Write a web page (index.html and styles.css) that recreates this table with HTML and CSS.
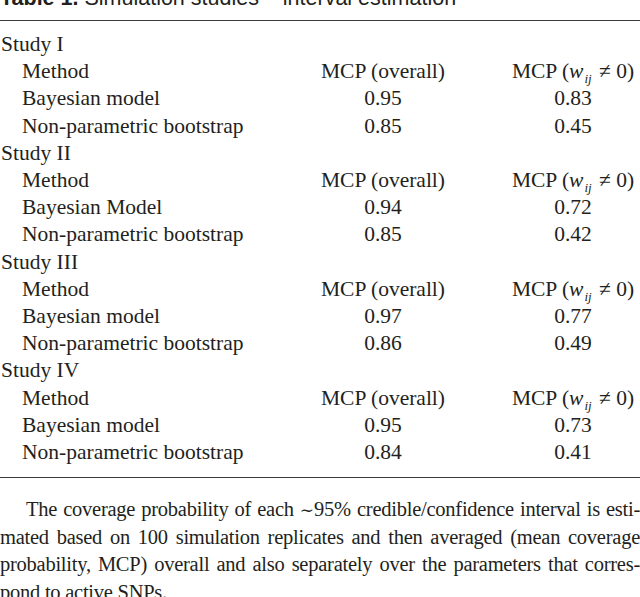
FILE: index.html
```html
<!DOCTYPE html>
<html>
<head>
<meta charset="utf-8">
<link rel="stylesheet" href="styles.css">
</head>
<body>
<div class="page">
  <p class="caption"><b>Table 1.</b> Simulation studies – interval estimation</p>
  <div class="table-wrap">
    <table class="tbl">
      <colgroup><col class="c1"><col class="c2"><col class="c3"></colgroup>
      <tbody>
        <tr><td class="grp" colspan="3">Study I</td></tr>
        <tr><td class="lbl">Method</td><td class="num">MCP (overall)</td><td class="num">MCP (<i>w</i><sub>ij</sub> ≠ 0)</td></tr>
        <tr><td class="lbl">Bayesian model</td><td class="num">0.95</td><td class="num">0.83</td></tr>
        <tr><td class="lbl">Non-parametric bootstrap</td><td class="num">0.85</td><td class="num">0.45</td></tr>
        <tr><td class="grp" colspan="3">Study II</td></tr>
        <tr><td class="lbl">Method</td><td class="num">MCP (overall)</td><td class="num">MCP (<i>w</i><sub>ij</sub> ≠ 0)</td></tr>
        <tr><td class="lbl">Bayesian Model</td><td class="num">0.94</td><td class="num">0.72</td></tr>
        <tr><td class="lbl">Non-parametric bootstrap</td><td class="num">0.85</td><td class="num">0.42</td></tr>
        <tr><td class="grp" colspan="3">Study III</td></tr>
        <tr><td class="lbl">Method</td><td class="num">MCP (overall)</td><td class="num">MCP (<i>w</i><sub>ij</sub> ≠ 0)</td></tr>
        <tr><td class="lbl">Bayesian model</td><td class="num">0.97</td><td class="num">0.77</td></tr>
        <tr><td class="lbl">Non-parametric bootstrap</td><td class="num">0.86</td><td class="num">0.49</td></tr>
        <tr><td class="grp" colspan="3">Study IV</td></tr>
        <tr><td class="lbl">Method</td><td class="num">MCP (overall)</td><td class="num">MCP (<i>w</i><sub>ij</sub> ≠ 0)</td></tr>
        <tr><td class="lbl">Bayesian model</td><td class="num">0.95</td><td class="num">0.73</td></tr>
        <tr><td class="lbl">Non-parametric bootstrap</td><td class="num">0.84</td><td class="num">0.41</td></tr>
      </tbody>
    </table>
  </div>
  <div class="note">
    <span class="line first">The coverage probability of each <span class="tilde">∼</span>95% credible/confidence interval is esti-</span>
    <span class="line">mated based on 100 simulation replicates and then averaged (mean coverage</span>
    <span class="line">probability, MCP) overall and also separately over the parameters that corres-</span>
    <span class="line last">pond to active SNPs.</span>
  </div>
</div>
</body>
</html>
```
FILE: styles.css
```css
html, body {
  margin: 0;
  padding: 0;
  background: #ffffff;
}
body {
  overflow: hidden;
  color: #231f20;
  font-family: "Liberation Serif", "DejaVu Serif", serif;
}
.page {
  width: 640px;
}
.caption {
  margin: -14.5px 0 0 0;
  font-family: "Liberation Sans", Arial, sans-serif;
  font-size: 21.5px;
  line-height: 24px;
  white-space: nowrap;
  color: #231f20;
}
.caption b {
  font-weight: bold;
}
.table-wrap {
  margin-top: 10.5px;
  border-top: 1.3px solid #3c3a3a;
  border-bottom: 1.3px solid #3c3a3a;
  padding: 10px 0 10.5px 0;
}
.tbl {
  width: 640px;
  border-collapse: collapse;
  table-layout: fixed;
  font-size: 21.5px;
}
.c1 { width: 260px; }
.c2 { width: 246px; }
.c3 { width: 134px; }
.tbl td {
  padding: 0;
  height: 27.2px;
  line-height: 27.2px;
  white-space: nowrap;
}
.grp {
  padding-left: 1px !important;
}
.lbl {
  padding-left: 22px !important;
}
.num {
  text-align: center;
}
.num i {
  font-style: italic;
}
.num sub {
  font-size: 13px;
  font-style: italic;
  line-height: 0;
  vertical-align: -5px;
  margin-left: 1px;
  margin-right: 2px;
}
.note {
  margin-top: 18px;
  font-size: 20.5px;
  line-height: 27.3px;
  letter-spacing: -0.25px;
  word-spacing: -2px;
}
.tilde {
  font-size: 17px;
  letter-spacing: 0;
}
.line {
  display: block;
  white-space: nowrap;
  overflow: hidden;
  text-align: justify;
  text-align-last: justify;
}
.line.first {
  padding-left: 26px;
}
.line.last {
  text-align: left;
  text-align-last: left;
  word-spacing: 0;
}
```
